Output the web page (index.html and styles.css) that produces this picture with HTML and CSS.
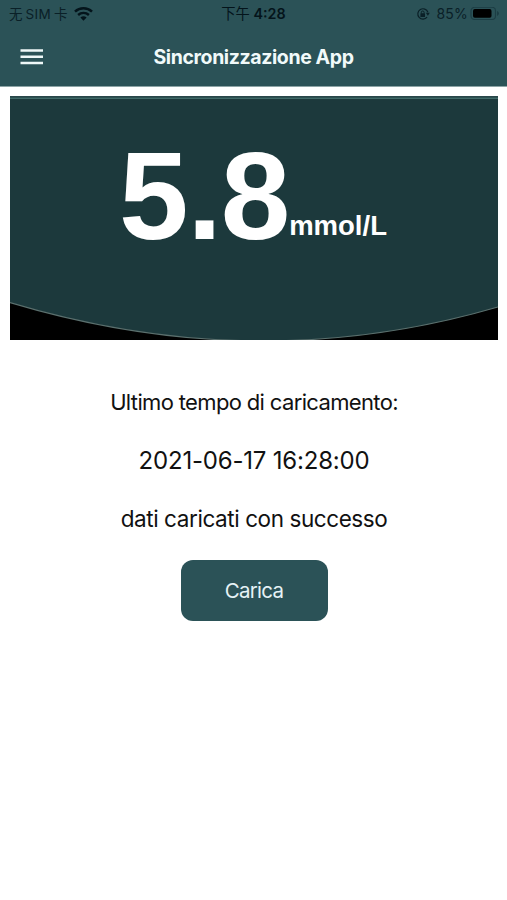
FILE: index.html
```html
<!DOCTYPE html>
<html lang="it">
<head>
  <meta charset="UTF-8" />
  <meta name="viewport" content="width=device-width, initial-scale=1.0"/>
  <title>Sincronizzazione App</title>
  <link rel="stylesheet" href="styles.css">
</head>
<body>

  <header class="top">
    <div class="status-bar">
      <div class="status-left">
        <span class="carrier"><span>无</span><span class="sim">SIM</span><span>卡</span></span>
        <svg class="wifi" width="19" height="15" viewBox="0 0 19 15">
          <path d="M1 4.7a12.4 12.4 0 0 1 17 0" fill="none" stroke="#04141b" stroke-width="2.5"/>
          <path d="M4.1 8a8 8 0 0 1 10.8 0" fill="none" stroke="#04141b" stroke-width="2.4"/>
          <path d="M6.4 10.6a4.5 4.5 0 0 1 6.2 0L9.5 13.800z" fill="#04141b"/>
        </svg>
      </div>
      <div class="clock"><span class="ampm">下午</span> 4:28</div>
      <div class="status-right">
        <svg width="14" height="14" viewBox="0 0 14 14">
          <path d="M11.9 5.2A5.2 5.2 0 1 0 11.1 10.2" fill="none" stroke="#0a2027" stroke-width="1.2"/>
          <path d="M9.800 5.800h4L11.9 8.800z" fill="#0a2027"/>
          <rect x="4.4" y="6.3" width="4.6" height="3.6" rx=".5" fill="#0a2027"/>
          <path d="M5.3 6.5V5.4a1.4 1.4 0 0 1 2.8 0v1.1" fill="none" stroke="#0a2027"/>
        </svg>
        <span class="percent">85%</span>
        <svg width="30" height="14" viewBox="0 0 30 14">
          <rect x="1" y=".3" width="24.500" height="12.2" rx="3.5" fill="none" stroke="#1c3d44" stroke-width="1.1"/>
          <rect x="3" y="2.1" width="18.5" height="8.700" rx="1.8" fill="#000"/>
          <path d="M27 4.100v4.800q2-.9 2-2.400T27 4.100z" fill="#1c3d44"/>
        </svg>
      </div>
    </div>
    <div class="nav-bar">
      <svg class="menu" width="23" height="16" viewBox="0 0 23 16">
        <path d="M.5 1.500h22.500M.5 7.800h22.500M.5 14h22.500" stroke="#eff8f8" stroke-width="2.6"/>
      </svg>
      <h1>Sincronizzazione App</h1>
    </div>
  </header>

  <main>
    <div class="meter">
      <svg class="dial" width="488" height="244" viewBox="0 0 488 244">
        <path d="M0 0H488V211Q248 281 0 206.500z" fill="#1c393c"/>
        <path d="M0 206.500Q248 281 488 211" fill="none" stroke="#5b706e" stroke-width="1.2"/>
        <path d="M0 .5H488" stroke="#29474a"/>
        <path d="M0 2.200H488" stroke="#416b69" stroke-width="1.4"/>
      </svg>
      <div class="reading"><span class="value">5.8</span><span class="unit">mmol/L</span></div>
    </div>

    <p class="label">Ultimo tempo di caricamento:</p>
    <p class="time">2021-06-17 16:28:00</p>
    <p class="result">dati caricati con successo</p>

    <button class="upload">Carica</button>
  </main>

</body>
</html>
```

FILE: styles.css
```css
* {
  box-sizing: border-box;
  margin: 0;
  padding: 0;
}

body {
  background: #fff;
  color: #111;
  font-family: Inter, "Noto Sans CJK SC", sans-serif;
  white-space: nowrap;
}

.top {
  height: 87px;
  background: #2b5257;
  border-bottom: 1px solid #8da4a6;
}

.status-bar {
  display: grid;
  grid-template-columns: 1fr auto 1fr;
  align-items: center;
  height: 28px;
  padding: 0 7px 0 9px;
  color: #0a2027;
  font-size: 13.5px;
  line-height: 28px;
}

.status-left,
.status-right,
.carrier {
  display: flex;
  align-items: center;
}

.status-left {
  gap: 7px;
}

.carrier {
  gap: 3px;
}

.sim {
  letter-spacing: 0.3px;
}

.clock {
  margin-right: 2px;
  color: #04141b;
  font-size: 14.3px;
  font-weight: 600;
}

.ampm {
  font-weight: 400;
}

.status-right {
  justify-content: flex-end;
}

.percent {
  margin: 0 2px 0 6px;
  font-size: 14px;
  letter-spacing: 0.2px;
}

.nav-bar {
  display: grid;
  grid-template-columns: 43px 1fr 43px;
  align-items: center;
  height: 58px;
  padding: 0 20px;
}

h1 {
  color: #f1fafa;
  font-size: 19.5px;
  font-weight: 700;
  letter-spacing: -0.4px;
  text-align: center;
}

main {
  display: flex;
  flex-direction: column;
  align-items: center;
  padding: 9px 9px 0 10px;
}

.meter {
  position: relative;
  width: 488px;
  height: 244px;
  background: #000;
  overflow: hidden;
}

.dial {
  position: absolute;
  top: 0;
  left: 0;
}

.reading {
  position: relative;
  display: flex;
  align-items: baseline;
  padding: 38px 0 0 109px;
  color: #fff;
  font-family: "Liberation Sans", Arial, sans-serif;
  font-weight: 700;
}

.value {
  font-size: 125px;
  line-height: 124px;
  letter-spacing: -1.2px;
}

.unit {
  margin-bottom: 4px;
  font-size: 27.5px;
  transform: translateY(-4px);
}

.label,
.time,
.result {
  line-height: 30px;
}

.label {
  margin-top: 47px;
  font-size: 22px;
  letter-spacing: -0.65px;
}

.time {
  margin-top: 29px;
  font-size: 24px;
  letter-spacing: -0.2px;
}

.result {
  margin-top: 28px;
  font-size: 22.5px;
  letter-spacing: -0.42px;
}

.upload {
  width: 147px;
  height: 61px;
  margin-top: 26px;
  background: #2b5257;
  color: #e6f3f6;
  border: none;
  border-radius: 12px;
  font-family: inherit;
  font-size: 20.5px;
  letter-spacing: -0.7px;
  cursor: pointer;
}
```
